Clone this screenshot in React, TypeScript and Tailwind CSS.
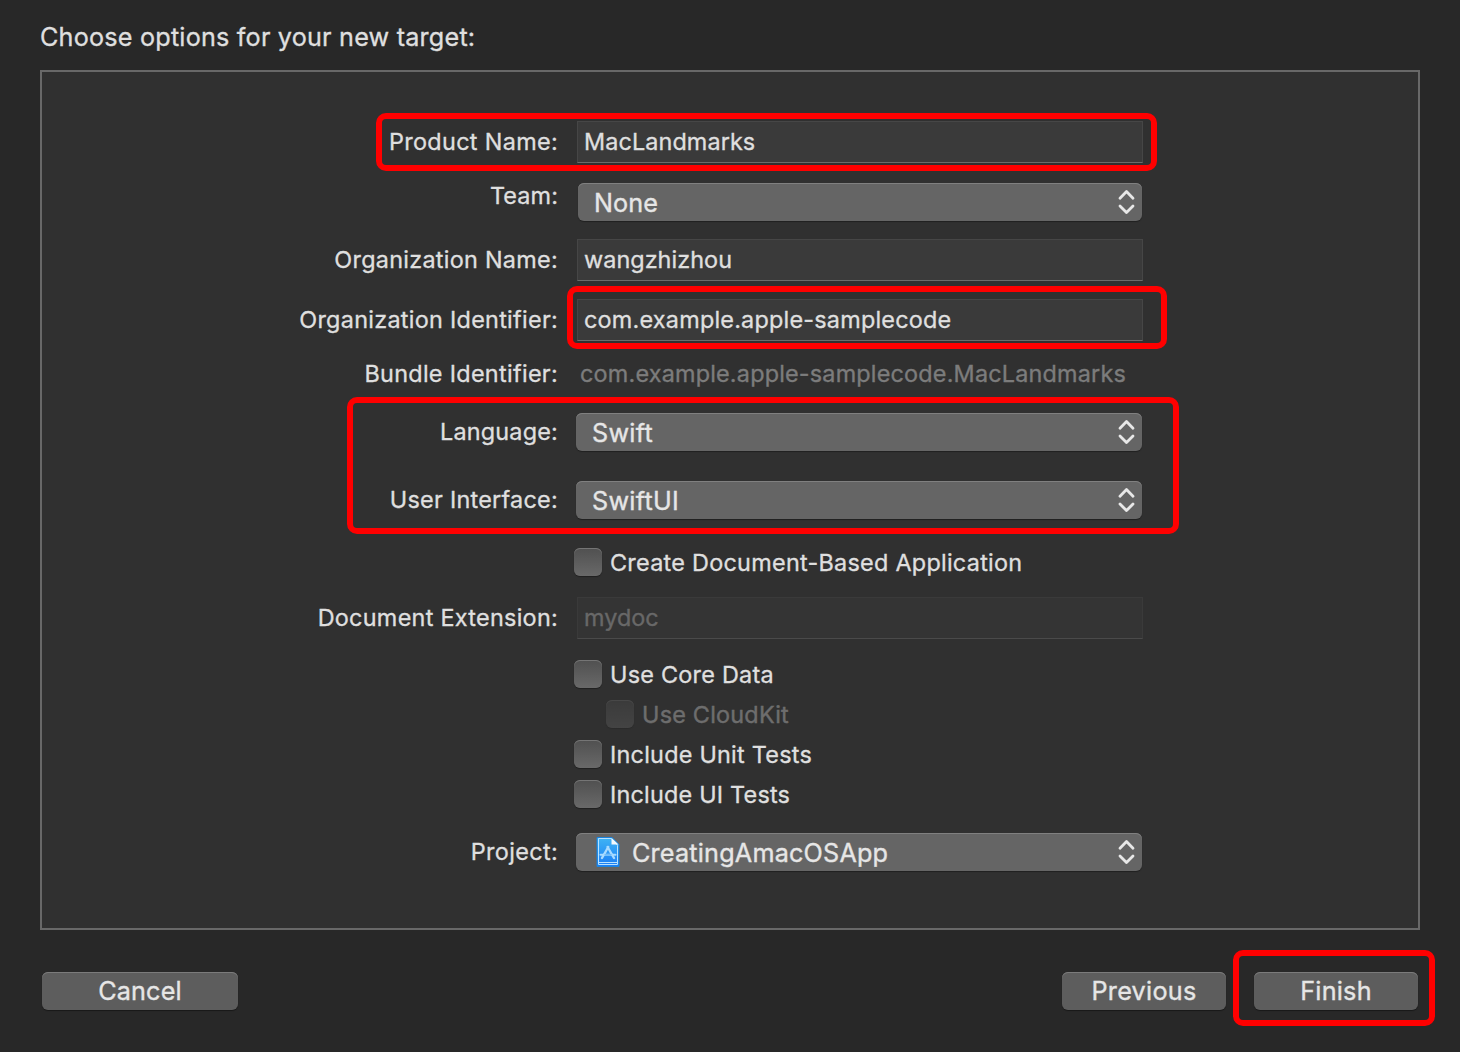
import type { ReactNode } from "react";

function Row({ label, className, labelClass = "", children }: { label?: string; className: string; labelClass?: string; children?: ReactNode }) {
  return (
    <div className={`flex shrink-0 items-center ${className}`}>
      <div className={`w-[516px] shrink-0 whitespace-nowrap text-right text-[23.4px] leading-[26px] text-[#dfdfdf] ${labelClass}`}>{label}</div>
      {children}
    </div>
  );
}

function Field({ value, textClass, disabled = false }: { value: string; textClass: string; disabled?: boolean }) {
  return (
    <div
      className={`ml-[19px] flex h-[42px] w-[566px] items-center border pl-[6px] text-[23.4px] ${
        disabled
          ? "border-[#3a3a3a] border-b-[#4a4a4a] bg-[#343434] text-[#686868]"
          : "border-[#464646] border-b-[#6b6b6b] bg-[#3a3a3a] text-[#dfdfdf]"
      }`}
    >
      <span className={`whitespace-nowrap ${textClass}`}>{value}</span>
    </div>
  );
}

function Select({ value, className, textClass, icon }: { value: string; className: string; textClass: string; icon?: ReactNode }) {
  return (
    <div
      className={`flex h-[38px] items-center rounded-[6px] bg-[#656565] pr-[7px] text-[25.2px] text-[#e6e6e6] shadow-[inset_0_1px_0_#808080,0_1px_1px_rgba(0,0,0,0.35)] ${className}`}
    >
      {icon}
      <span className={`flex-1 whitespace-nowrap pt-[2px] leading-[38px] ${textClass}`}>{value}</span>
      <svg width="17" height="26" viewBox="0 0 17 26" fill="none" stroke="#e8e8e8" strokeWidth="2.8" strokeLinecap="round" strokeLinejoin="round">
        <path d="M2 9.2 8.5 2.6 15 9.2M2 17 8.5 23.6 15 17" />
      </svg>
    </div>
  );
}

function Check({ label, className, textClass, disabled = false }: { label: string; className: string; textClass: string; disabled?: boolean }) {
  return (
    <div className={`flex items-center ${className} ${disabled ? "opacity-35" : ""}`}>
      <div className="h-7 w-7 rounded-[6px] bg-linear-to-b from-[#505050] to-[#696969] shadow-[inset_0_1px_0_#757575,0_1px_1px_rgba(0,0,0,0.35)]" />
      <span className={`ml-2 whitespace-nowrap pt-[2px] text-[23.4px] leading-[28px] text-[#dfdfdf] ${textClass}`}>{label}</span>
    </div>
  );
}

function ProjectIcon() {
  return (
    <svg className="ml-[20px] mr-[12px] shrink-0" width="24" height="32" viewBox="0 0 24 32">
      <defs>
        <linearGradient id="doc" x1="0" y1="0" x2="0" y2="1">
          <stop offset="0" stopColor="#3fb4f4" />
          <stop offset="1" stopColor="#1a7df5" />
        </linearGradient>
      </defs>
      <path d="M1 1.5H16L23 8.5V30.5H1Z" fill="url(#doc)" stroke="#1c83dc" />
      <path d="M2.5 2.5H15.2L21.5 9.3V28.5H2.5Z" fill="none" stroke="#b9e2ff" />
      <path d="M3 26.5H21" stroke="#b9e2ff" />
      <path d="M15.5 2V8.5H22.5Z" fill="#f4f8fb" />
      <g fill="none" stroke="#a9dbff" strokeLinecap="round">
        <path d="M12.3 11 6 22M11.5 11 18 22" strokeWidth="2.4" />
        <path d="M4.5 18.8H19.5" strokeWidth="2" />
      </g>
      <path d="M11.9 14.5V17M8.5 18.8H15.5" stroke="#2f9bf5" strokeWidth="0.7" />
    </svg>
  );
}

function PushButton({ label, className }: { label: string; className: string }) {
  return (
    <button
      className={`flex h-[38px] items-center justify-center rounded-[6px] bg-[#5d5d5d] text-[25.2px] leading-[38px] text-[#e6e6e6] shadow-[inset_0_1px_0_#7b7b7b,0_1px_1px_rgba(0,0,0,0.4)] ${className}`}
    >
      {label}
    </button>
  );
}

function Highlight({ className }: { className: string }) {
  return <div className={`pointer-events-none absolute rounded-[10px] border-[6px] border-[#ff0000] ${className}`} />;
}

export default function App() {
  return (
    <div className="relative flex h-[1052px] w-[1460px] flex-col overflow-hidden bg-[#282828] px-10 font-['Inter',sans-serif] [-webkit-text-stroke:0.35px]">
      <h1 className="mt-[20px] h-[50px] whitespace-nowrap text-[25.2px] leading-[34px] tracking-[0.2px] text-[#dfdfdf]">Choose options for your new target:</h1>

      <main className="flex h-[860px] flex-col border-2 border-[#686868] bg-[#303030] pt-[49px]">
        <Row label="Product Name:" className="h-[42px]" labelClass="tracking-[0.33px]">
          <Field value="MacLandmarks" textClass="tracking-[0.1px]" />
        </Row>
        <Row label="Team:" className="mt-5 h-[38px]" labelClass="self-start tracking-[0.1px]">
          <Select value="None" className="ml-5 w-[564px] pl-4" textClass="tracking-[0.1px]" />
        </Row>
        <Row label="Organization Name:" className="mt-[18px] h-[42px]" labelClass="tracking-[0.28px]">
          <Field value="wangzhizhou" textClass="tracking-[0.05px]" />
        </Row>
        <Row label="Organization Identifier:" className="mt-[18px] h-[42px]" labelClass="tracking-[0.285px]">
          <Field value="com.example.apple-samplecode" textClass="tracking-[0.22px]" />
        </Row>
        <Row label="Bundle Identifier:" className="mt-5 h-[26px]" labelClass="tracking-[0.31px]">
          <span className="ml-[22px] whitespace-nowrap text-[23.4px] tracking-[0.193px] text-[#7c7c7c]">com.example.apple-samplecode.MacLandmarks</span>
        </Row>
        <Row label="Language:" className="mt-[26px] h-[38px]" labelClass="tracking-[0.2px]">
          <Select value="Swift" className="ml-[18px] w-[566px] pl-4" textClass="tracking-[0.29px]" />
        </Row>
        <Row label="User Interface:" className="mt-[30px] h-[38px]" labelClass="tracking-[0.26px]">
          <Select value="SwiftUI" className="ml-[18px] w-[566px] pl-4" textClass="tracking-[0.3px]" />
        </Row>
        <Row className="mt-[29px] h-7">
          <Check label="Create Document-Based Application" className="ml-4" textClass="tracking-[0.27px]" />
        </Row>
        <Row label="Document Extension:" className="mt-[21px] h-[42px]" labelClass="tracking-[0.28px]">
          <Field value="mydoc" textClass="tracking-[0.03px]" disabled />
        </Row>
        <Row className="mt-[21px] h-7">
          <Check label="Use Core Data" className="ml-4" textClass="tracking-[0.25px]" />
        </Row>
        <Row className="mt-3 h-7">
          <Check label="Use CloudKit" className="ml-12" textClass="tracking-[0.22px]" disabled />
        </Row>
        <Row className="mt-3 h-7">
          <Check label="Include Unit Tests" className="ml-4" textClass="tracking-[0.24px]" />
        </Row>
        <Row className="mt-3 h-7">
          <Check label="Include UI Tests" className="ml-4" textClass="tracking-[0.21px]" />
        </Row>
        <Row label="Project:" className="mt-[25px] h-[38px]" labelClass="tracking-[0.35px]">
          <Select value="CreatingAmacOSApp" className="ml-[18px] w-[566px]" textClass="tracking-[0.2px]" icon={<ProjectIcon />} />
        </Row>
      </main>

      <footer className="mt-[42px] flex px-[2px]">
        <PushButton label="Cancel" className="w-[196px] tracking-[0.15px]" />
        <PushButton label="Previous" className="ml-auto w-[164px] tracking-[0.27px]" />
        <PushButton label="Finish" className="ml-7 w-[164px] tracking-[0.25px]" />
      </footer>

      <Highlight className="left-[376px] top-[113px] h-[58px] w-[781px]" />
      <Highlight className="left-[567px] top-[286px] h-[63px] w-[600px]" />
      <Highlight className="left-[347px] top-[397px] h-[137px] w-[832px]" />
      <Highlight className="left-[1233px] top-[950px] h-[76px] w-[202px]" />
    </div>
  );
}
